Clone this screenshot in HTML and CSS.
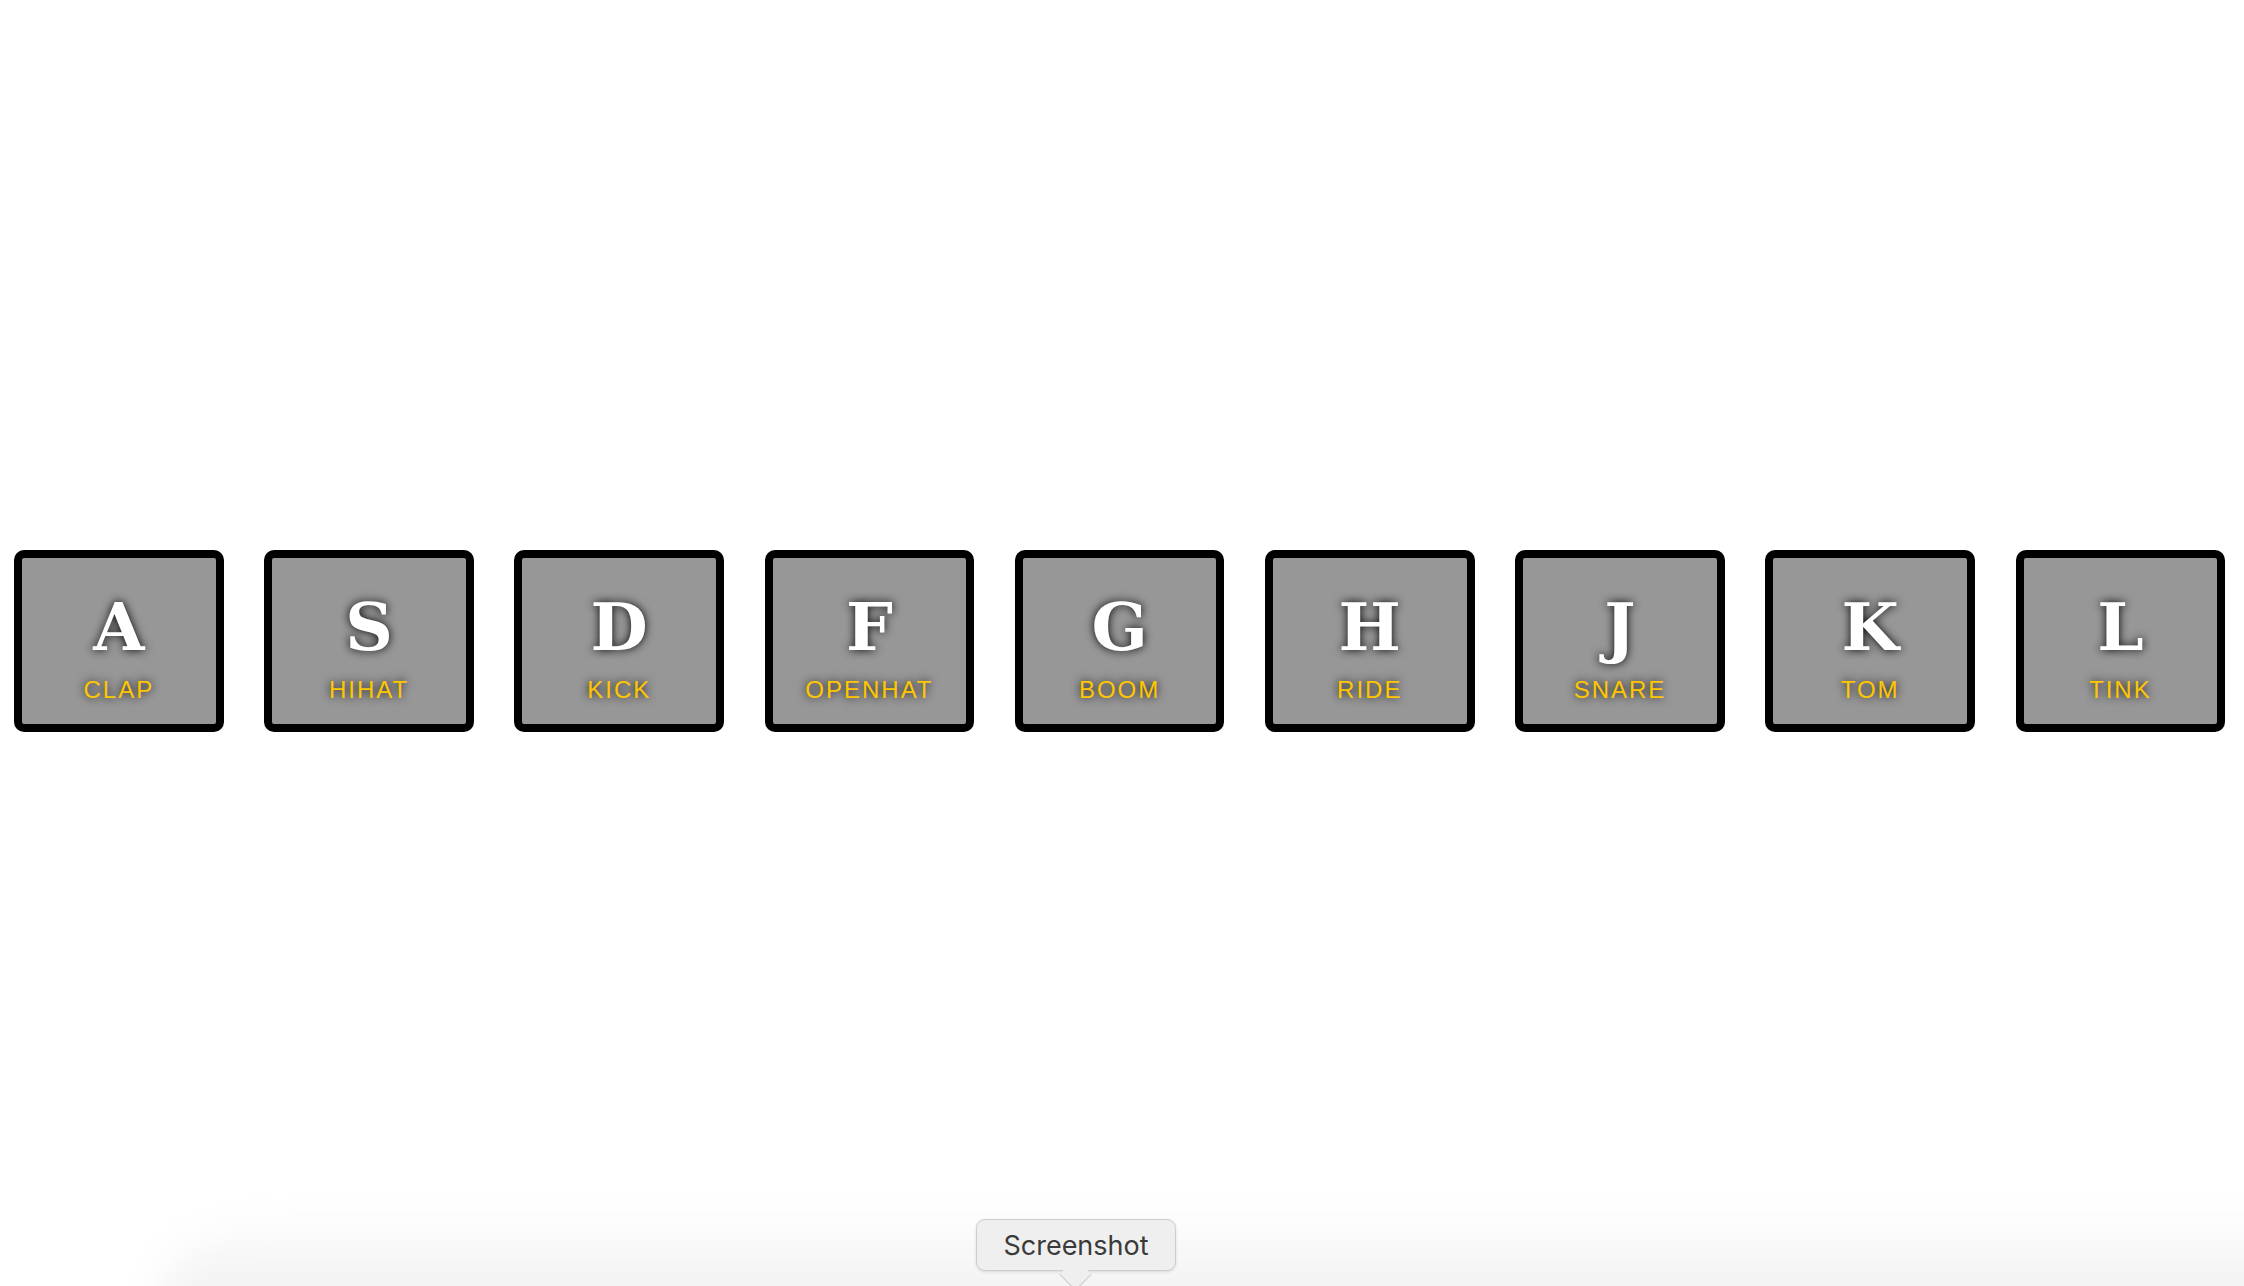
FILE: index.html
```html
<!DOCTYPE html>
<html>
<head>
<meta charset="utf-8">
<title>JS Drum Kit</title>
<link rel="stylesheet" href="styles.css">
</head>
<body>
<div class="keys">
  <div class="key"><kbd class="letter">A</kbd><span class="sound">clap</span></div>
  <div class="key"><kbd class="letter">S</kbd><span class="sound">hihat</span></div>
  <div class="key"><kbd class="letter">D</kbd><span class="sound">kick</span></div>
  <div class="key"><kbd class="letter">F</kbd><span class="sound">openhat</span></div>
  <div class="key"><kbd class="letter">G</kbd><span class="sound">boom</span></div>
  <div class="key"><kbd class="letter">H</kbd><span class="sound">ride</span></div>
  <div class="key"><kbd class="letter">J</kbd><span class="sound">snare</span></div>
  <div class="key"><kbd class="letter">K</kbd><span class="sound">tom</span></div>
  <div class="key"><kbd class="letter">L</kbd><span class="sound">tink</span></div>
</div>
<div class="dock-glow"></div>
<div class="tooltip">Screenshot</div>
</body>
</html>
```
FILE: styles.css
```css
html, body {
  margin: 0;
  padding: 0;
  background: #ffffff;
  font-family: "Liberation Sans", Arial, sans-serif;
  overflow: hidden;
}
.keys {
  display: flex;
  align-items: center;
  min-height: 100vh;
  padding-left: 14px;
  gap: 40.5px;
  padding-bottom: 4px;
  box-sizing: border-box;
}
.key {
  box-sizing: border-box;
  flex: 0 0 209.7px;
  width: 209.7px;
  border: 8px solid #000;
  border-radius: 10px;
  padding: 20px 10px;
  text-align: center;
  color: #fff;
  background: #979797;
  text-shadow: 0 0 10px #000;
}
.letter {
  display: block;
  font-family: "DejaVu Serif", "Liberation Serif", serif;
  font-weight: bold;
  font-size: 66px;
  line-height: 98px;
}
.sound {
  display: block;
  font-size: 24px;
  line-height: 28px;
  text-transform: uppercase;
  letter-spacing: 2px;
  color: #ffc600;
}
.dock-glow {
  position: absolute;
  left: 160px;
  right: -60px;
  bottom: -30px;
  height: 105px;
  border-top-left-radius: 140px 90px;
  background: linear-gradient(to bottom, rgba(242,242,242,0) 0%, #f7f7f7 45%, #efefef 100%);
  filter: blur(18px);
}
.tooltip {
  position: absolute;
  left: 976px;
  top: 1219px;
  width: 200px;
  height: 52px;
  box-sizing: border-box;
  background: #efefef;
  border: 1px solid #cdcdcd;
  border-radius: 9px;
  box-shadow: 0 1px 3px rgba(0,0,0,0.12);
  font-family: Inter, "Noto Sans", sans-serif;
  font-size: 27px;
  color: #3a3a3a;
  display: flex;
  align-items: center;
  justify-content: center;
}
.tooltip::after {
  content: "";
  position: absolute;
  left: 87px;
  bottom: -16px;
  width: 22px;
  height: 22px;
  background: #efefef;
  border-right: 1px solid #cdcdcd;
  border-bottom: 1px solid #cdcdcd;
  transform: rotate(45deg);
}
```
